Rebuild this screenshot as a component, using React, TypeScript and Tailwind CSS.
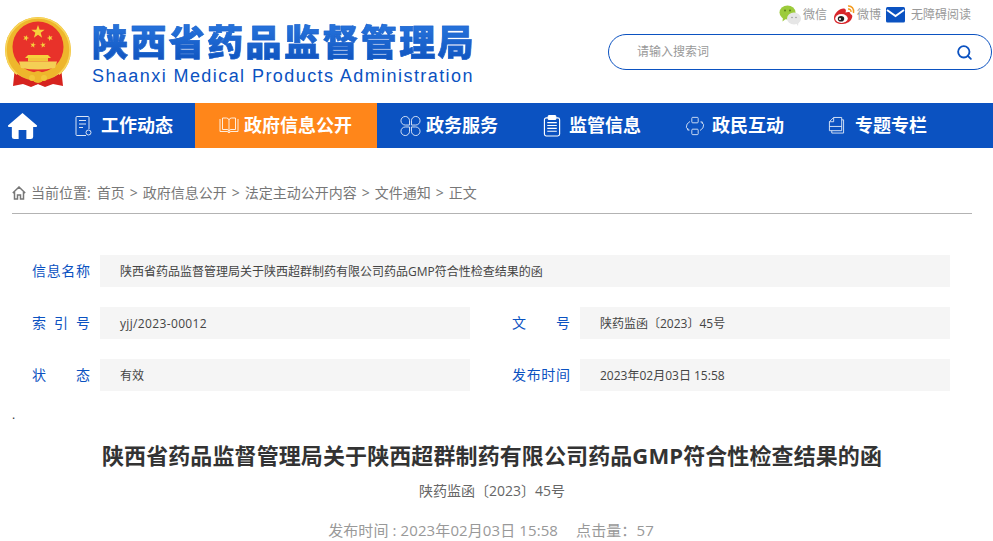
import { Search } from "lucide-react";

const font = { fontFamily: '"Open Sans", "Noto Sans CJK SC", sans-serif' };

function Emblem() {
  const star = (cx: number, cy: number, r: number, rot = 0) => {
    const pts: string[] = [];
    for (let i = 0; i < 10; i++) {
      const a = ((-90 + rot + i * 36) * Math.PI) / 180;
      const rr = i % 2 ? r * 0.4 : r;
      pts.push(`${cx + rr * Math.cos(a)},${cy + rr * Math.sin(a)}`);
    }
    return <polygon points={pts.join(" ")} fill="#f6d23c" />;
  };
  return (
    <svg width="68" height="72" viewBox="0 0 68 72" className="shrink-0">
      <path d="M10 50 L8 69 L18 67 L26 70 L33 67 L40 70 L48 67 L58 69 L56 50 Z" fill="#d6231f" />
      <circle cx="33" cy="29" r="33" fill="#eeb62c" transform="translate(0 4)" />
      <circle cx="33" cy="33" r="32" fill="none" stroke="#f7d65a" strokeWidth="1.5" />
      <circle cx="33" cy="30" r="25.5" fill="#e8322a" />
      {star(33, 15, 7)}
      {star(21, 21, 3.2, 20)}
      {star(45, 21, 3.2, -20)}
      {star(28, 28, 3, 10)}
      {star(38, 28, 3, -10)}
      <path d="M23 38 H43 L46 41 H20 Z" fill="#f6d23c" />
      <rect x="23" y="41" width="20" height="3.5" fill="#f2c63a" />
      <path d="M14 44.5 H52 L50 51 Q33 54 16 51 Z" fill="#f4cf55" />
      <path d="M12 57 Q22 64 33 64 Q44 64 54 57 L57 68 L48 66 L40 69 L33 67 L26 69 L18 66 L9 68 Z" fill="#d6231f" />
      <circle cx="33" cy="60" r="6" fill="#eeb62c" />
      <circle cx="27" cy="61" r="3" fill="#f2c63a" />
      <circle cx="39" cy="61" r="3" fill="#f2c63a" />
    </svg>
  );
}

function WechatIcon() {
  return (
    <svg width="24" height="24" viewBox="0 0 24 24">
      <ellipse cx="9.5" cy="9.5" rx="8" ry="7" fill="#9ccb3b" />
      <path d="M5 14 L4.5 18.5 L9 15 Z" fill="#9ccb3b" />
      <circle cx="7" cy="7.5" r="1" fill="#5b7f1b" />
      <circle cx="12" cy="7.5" r="1" fill="#5b7f1b" />
      <ellipse cx="16" cy="15.5" rx="7" ry="6" fill="#e6e6e6" />
      <path d="M18 20 L20 23 L20.5 19 Z" fill="#e6e6e6" />
      <circle cx="14" cy="14.5" r="0.8" fill="#999" />
      <circle cx="18" cy="14.5" r="0.8" fill="#999" />
    </svg>
  );
}

function WeiboIcon() {
  return (
    <svg width="24" height="22" viewBox="0 0 24 22">
      <path d="M2 14 C2 9 8 4 12 4.5 C14.5 5 14 7.5 13.5 8.5 C16 7.5 18.5 7.5 18.5 10 C21 11 20.5 13 19.5 15 C17.5 19 12 20.5 8 20 C4.5 19.5 2 17.5 2 14 Z" fill="#d8262b" />
      <ellipse cx="9.5" cy="14.5" rx="6.3" ry="4.4" fill="#fff" />
      <ellipse cx="9" cy="14.8" rx="3.2" ry="2.8" fill="#222" />
      <circle cx="8" cy="15" r="1" fill="#fff" />
      <path d="M16 2 C19.5 1.5 22.5 5 21.5 9" stroke="#f39a1e" strokeWidth="1.5" fill="none" />
      <path d="M16 5 C18 4.8 19.3 6.3 19 8" stroke="#f39a1e" strokeWidth="1.3" fill="none" />
    </svg>
  );
}

function MailIcon() {
  return (
    <svg width="20" height="16" viewBox="0 0 20 16">
      <rect width="19" height="15.5" rx="1.5" fill="#0b52c1" />
      <path d="M1 3 L9.5 9 L18 3" stroke="#fff" strokeWidth="2" fill="none" />
    </svg>
  );
}

function HomeIcon() {
  return (
    <svg width="31" height="28" viewBox="0 0 32 28" fill="#fff">
      <path d="M16 0.5 L31 13.5 Q31.5 15 30 15 L27 15 L27 25 Q27 27.5 24.5 27.5 L20 27.5 L20 18 L12 18 L12 27.5 L7.5 27.5 Q5 27.5 5 25 L5 15 L2 15 Q0.5 15 1 13.5 Z" />
    </svg>
  );
}

const stroke = { fill: "none", stroke: "#fff", strokeWidth: 1, opacity: 0.85 };

function DocIcon() {
  return (
    <svg width="18" height="22" viewBox="0 0 18 22" {...stroke}>
      <path d="M11 20.5 H2 Q1 20.5 1 19.5 V2.5 Q1 1.5 2 1.5 H13 Q14 1.5 14 2.5 V14" />
      <path d="M4 5.5 H11 M4 9 H11 M4 12.5 H8" />
      <circle cx="13.5" cy="17.5" r="2.5" />
    </svg>
  );
}

function BookIcon() {
  return (
    <svg width="20" height="18" viewBox="0 0 20 18" {...stroke}>
      <path d="M1 2 V14.5 H8 Q9.5 14.5 10 16 Q10.5 14.5 12 14.5 H19 V2 M10 3 V16 M3.5 1 H7.5 Q9.5 1 10 3 Q10.5 1 12.5 1 H16.5 V12.5 H12 Q10.5 12.5 10 14 Q9.5 12.5 8 12.5 H3.5 Z" />
    </svg>
  );
}

function CloverIcon() {
  return (
    <svg width="21" height="22" viewBox="0 0 22 22" {...stroke}>
      <path d="M10 10 H5.5 A4.5 4.5 0 1 1 10 5.5 Z" />
      <path d="M12 10 H16.5 A4.5 4.5 0 1 0 12 5.5 Z" />
      <path d="M10 12 H5.5 A4.5 4.5 0 1 0 10 16.5 Z" />
      <path d="M12 12 H16.5 A4.5 4.5 0 1 1 12 16.5 Z" />
    </svg>
  );
}

function ClipboardIcon() {
  return (
    <svg width="19" height="24" viewBox="0 0 20 24" fill="none" stroke="#fff" strokeWidth="1.2">
      <rect x="1.5" y="3.5" width="16" height="19" rx="2" />
      <rect x="5.5" y="1" width="8" height="4" rx="1" fill="#fff" />
      <path d="M4.5 8.5 H14.5 M4.5 11.5 H14.5 M4.5 14.5 H14.5 M4.5 17.5 H14.5" />
    </svg>
  );
}

function SwapIcon() {
  return (
    <svg width="20" height="20" viewBox="0 0 22 22" {...stroke}>
      <rect x="7.5" y="1.5" width="7" height="6" rx="1" />
      <rect x="7.5" y="14.5" width="7" height="6" rx="1" />
      <path d="M5.5 6 Q1 8.5 1.5 12.5 L3.5 15 M16.5 16 Q21 13.5 20.5 9.5 L18.5 7" />
      <path d="M5 15.5 H3 V13.5 M17 6.5 H19 V8.5" />
    </svg>
  );
}

function PagesIcon() {
  return (
    <svg width="17" height="19" viewBox="0 0 18 20" {...stroke}>
      <path d="M6 1.5 H14.5 V15.5 H1.5 V6 Z M6 1.5 V6 H1.5" />
      <path d="M1.5 11 H14.5" />
      <path d="M14.5 4 H16.5 V18 H4 V15.5" />
    </svg>
  );
}

function NavItem({ icon, label, className }: { icon: React.ReactNode; label: string; className: string }) {
  return (
    <a className={`flex items-center text-[18px] font-bold whitespace-nowrap text-white ${className}`}>
      {icon}
      {label}
    </a>
  );
}

function Field({ label, value, wide, valueClass = "" }: { label: string[]; value: string; wide?: boolean; valueClass?: string }) {
  return (
    <div className={`flex items-center ${wide ? "col-span-2" : ""}`}>
      <div className="flex w-[58px] justify-between text-sm text-[#0b52c1]">
        {label.map((c) => (
          <span key={c}>{c}</span>
        ))}
      </div>
      <div className={`ml-2.5 flex h-8 flex-1 items-center bg-[#f5f5f5] pt-px pl-5 text-xs text-[#444] ${valueClass}`}>{value}</div>
    </div>
  );
}

export default function App() {
  return (
    <div className="h-[541px] w-[993px] overflow-hidden bg-white" style={font}>
      <header className="relative flex h-[103px]">
        <div className="ml-[5px] mt-[17px]">
          <Emblem />
        </div>
        <div className="ml-[19px] mt-[19px]">
          <div className="bg-gradient-to-b from-[#2a78e0] to-[#0b4fbb] bg-clip-text text-[36px] leading-[48px] font-black tracking-[2.4px] whitespace-nowrap text-transparent [-webkit-text-stroke:0.5px_#1a62cc]">
            陕西省药品监督管理局
          </div>
          <div className="mt-[-1px] text-[18px] leading-[20px] tracking-[1.43px] whitespace-nowrap text-[#0b52c1]" style={{ fontFamily: '"Liberation Sans", sans-serif' }}>
            Shaanxi Medical Products Administration
          </div>
        </div>
        <div className="ml-auto mr-px mt-[3px] flex w-[385px] flex-col items-end">
          <div className="mr-[21px] mt-px flex h-[22px] items-center text-xs text-[#999]">
            <WechatIcon />
            <span className="ml-[1px]">微信</span>
            <span className="ml-[5px]"><WeiboIcon /></span>
            <span className="ml-[1px]">微博</span>
            <span className="ml-[5px]"><MailIcon /></span>
            <span className="ml-[5px]">无障碍阅读</span>
          </div>
          <div className="mt-2 flex h-9 w-[384px] items-center justify-between rounded-[18px] border border-[#0b52c1] pr-[18px] pl-[28px] text-xs text-[#999]">
            <span>请输入搜索词</span>
            <Search size={17} strokeWidth={2.6} className="text-[#0b52c1]" />
          </div>
        </div>
      </header>

      <nav className="flex h-[45px] bg-[#0b52c1]">
        <a className="flex w-[44px] items-center justify-center"><HomeIcon /></a>
        <NavItem className="ml-[31px] gap-2" icon={<DocIcon />} label="工作动态" />
        <NavItem className="ml-[22px] w-[182px] gap-[5px] bg-[#ff861a] pl-[24px]" icon={<BookIcon />} label="政府信息公开" />
        <NavItem className="ml-[23px] gap-[5px]" icon={<CloverIcon />} label="政务服务" />
        <NavItem className="ml-[45px] gap-[7px]" icon={<ClipboardIcon />} label="监管信息" />
        <NavItem className="ml-[44px] gap-[7px]" icon={<SwapIcon />} label="政民互动" />
        <NavItem className="ml-[44px] gap-2.5" icon={<PagesIcon />} label="专题专栏" />
      </nav>

      <main className="ml-3 w-[960px]">
        <div className="mt-[33px] flex h-[33px] items-center border-b border-[#b3b3b3] pb-2 text-sm text-[#777]">
          <svg width="14" height="14" viewBox="0 0 14 14" fill="none" stroke="#777" strokeWidth="1.5" className="mr-[5px]">
            <path d="M0.8 7 L7 1 L13.2 7 M2.5 6 V13 H5.5 V9 H8.5 V13 H11.5 V6" />
          </svg>
          <span>当前位置:</span>
          <span className="ml-[6px]">首页</span>
          <span className="mx-[5px]">&gt;</span>
          <span>政府信息公开</span>
          <span className="mx-[5px]">&gt;</span>
          <span>法定主动公开内容</span>
          <span className="mx-[5px]">&gt;</span>
          <span>文件通知</span>
          <span className="mx-[5px]">&gt;</span>
          <span>正文</span>
        </div>

        <div className="mt-[41px] ml-5 grid w-[918px] grid-cols-[438px_438px] gap-x-[42px] gap-y-5">
          <Field wide label={["信", "息", "名", "称"]} value="陕西省药品监督管理局关于陕西超群制药有限公司药品GMP符合性检查结果的函" />
          <Field label={["索", "引", "号"]} value="yjj/2023-00012" valueClass="tracking-[0.35px]" />
          <Field label={["文", "号"]} value="陕药监函〔2023〕45号" />
          <Field label={["状", "态"]} value="有效" />
          <Field label={["发", "布", "时", "间"]} value="2023年02月03日 15:58" />
        </div>

        <div className="mt-[14px] h-5 text-xs leading-5 text-[#333]">.</div>

        <h1 className="mt-[14px] text-center text-[22px] leading-8 font-bold tracking-[0.1px] whitespace-nowrap text-[#333]">
          陕西省药品监督管理局关于陕西超群制药有限公司药品GMP符合性检查结果的函
        </h1>
        <p className="mt-[10px] text-center text-sm leading-5 text-[#666]">陕药监函〔2023〕45号</p>
        <p className="mt-[19px] pr-[2px] text-center text-[15px] leading-5 tracking-[0.1px] text-[#999]">
          发布时间 : 2023年02月03日 15:58<span className="ml-[18px]">点击量：57</span>
        </p>
      </main>
    </div>
  );
}
